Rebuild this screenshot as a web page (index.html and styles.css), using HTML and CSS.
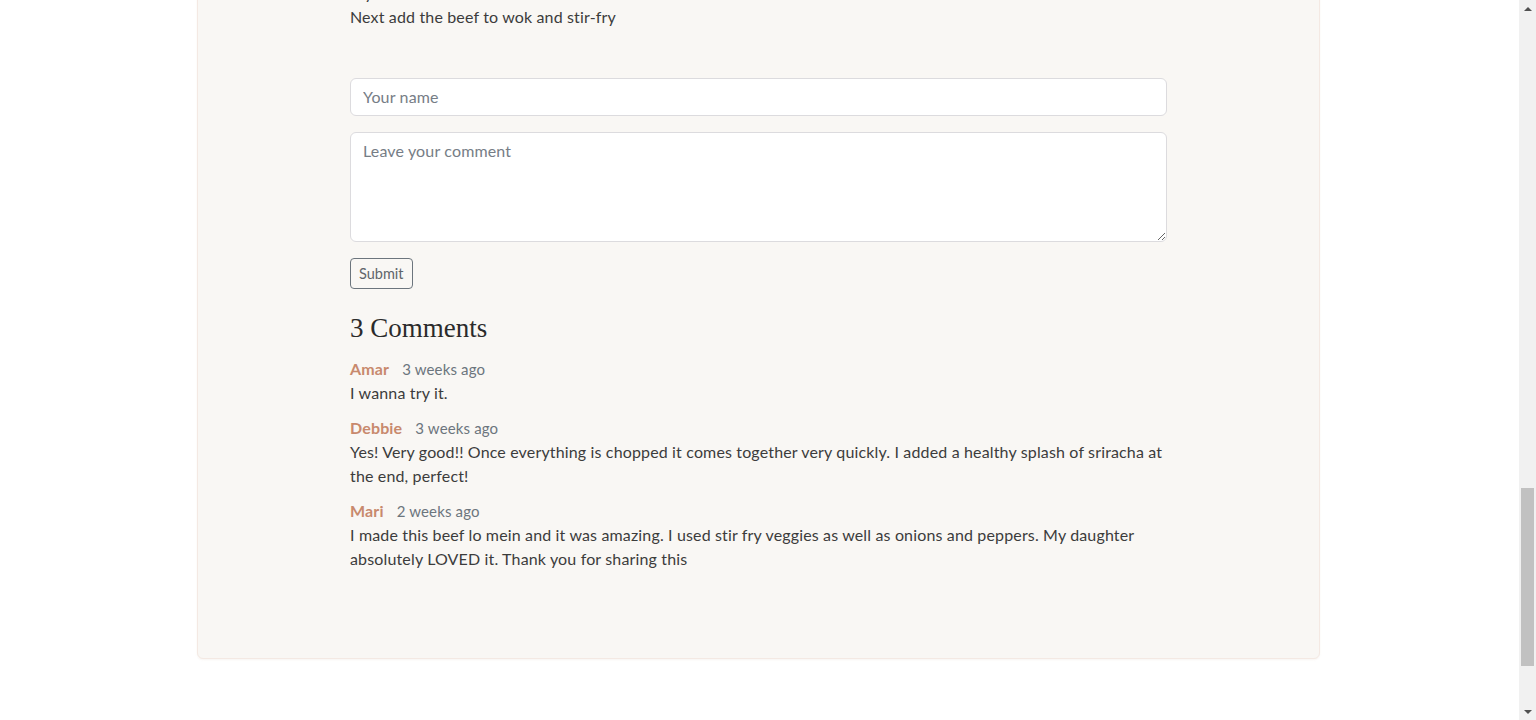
FILE: index.html
```html
<!DOCTYPE html>
<html lang="en">
<head>
<meta charset="utf-8">
<title>Beef Lo Mein</title>
<link rel="stylesheet" href="styles.css">
</head>
<body>
<main class="main">
  <article class="card">
    <h2 class="section-title">Instructions</h2>
    <div class="steps">
      <p>Heat the oil in a wok over medium heat.</p>
      <p>Add the onions and the carrots.</p>
      <p>Fry the onions until soft.</p>
      <p id="last-step">Next add the beef to wok and stir-fry</p>
    </div>

    <form class="comment-form">
      <input class="field" type="text" placeholder="Your name">
      <textarea class="field area" rows="4" placeholder="Leave your comment"></textarea>
      <button class="submit" type="button">Submit</button>
    </form>

    <h3 class="comments-title">3 Comments</h3>
    <div class="comment">
      <div class="comment-head"><span class="name">Amar</span><span class="ago">3 weeks ago</span></div>
      <p class="comment-body">I wanna try it.</p>
    </div>
    <div class="comment">
      <div class="comment-head"><span class="name">Debbie</span><span class="ago">3 weeks ago</span></div>
      <p class="comment-body">Yes! Very good!! Once everything is chopped it comes together very quickly. I added a healthy splash of sriracha at the end, perfect!</p>
    </div>
    <div class="comment">
      <div class="comment-head"><span class="name">Mari</span><span class="ago">2 weeks ago</span></div>
      <p class="comment-body">I made this beef lo mein and it was amazing. I used stir fry veggies as well as onions and peppers. My daughter absolutely LOVED it. Thank you for sharing this</p>
    </div>
  </article>
</main>
<div class="footer-space"></div>

<div class="scrollbar" aria-hidden="true">
  <div class="sb-btn"><span class="arrow-up"></span></div>
  <div class="sb-track"><div class="sb-thumb"></div></div>
  <div class="sb-btn"><span class="arrow-down"></span></div>
</div>
<script src="script.js"></script>
</body>
</html>
```
FILE: styles.css
```css
html {
  scroll-behavior: auto;
}
body {
  margin: 0 17px 0 0;
  background: #ffffff;
  font-family: "Lato", "Liberation Sans", sans-serif;
  font-size: 16px;
  line-height: 24px;
  letter-spacing: 0.15px;
  color: #3c3c3c;
}
p {
  margin: 0;
}
.main {
  padding: 40px 2px 0 0;
}
.card {
  box-sizing: border-box;
  width: 1123px;
  margin: 0 auto;
  padding: 48px 152px 76px 152px;
  background: #f9f7f4;
  border: 1px solid #f4e9e3;
  border-radius: 6px;
  box-shadow: 0 1px 2px rgba(200, 170, 150, 0.12);
}
.section-title {
  font-family: "Liberation Serif", serif;
  font-weight: 400;
  font-size: 28px;
  line-height: 34px;
  letter-spacing: 0;
  margin: 0 0 12px;
  color: #2b2b2b;
}
.comment-form {
  display: flex;
  flex-direction: column;
  align-items: flex-start;
  gap: 16px;
  margin-top: 49px;
}
.field {
  box-sizing: border-box;
  width: 100%;
  padding: 6px 12px;
  font-family: "Lato", "Liberation Sans", sans-serif;
  font-size: 16px;
  line-height: 24px;
  letter-spacing: 0.15px;
  color: #3c3c3c;
  background: #ffffff;
  border: 1px solid #dcdbde;
  border-radius: 6px;
  outline: none;
}
.field::placeholder {
  color: #767d86;
}
.area {
  height: 110px;
  resize: vertical;
  display: block;
}
.submit {
  font-family: "Lato", "Liberation Sans", sans-serif;
  font-size: 14.5px;
  line-height: 21px;
  padding: 4px 8px;
  color: #5f656b;
  background: transparent;
  border: 1px solid #6c757d;
  border-radius: 4px;
}
.comments-title {
  font-family: "Liberation Serif", serif;
  font-weight: 400;
  font-size: 27px;
  line-height: 32px;
  letter-spacing: 0;
  color: #2b2b2b;
  margin: 23px 0 13px;
}
.comment {
  margin-bottom: 11px;
}
.comment-head {
  display: flex;
  align-items: baseline;
  gap: 13px;
  height: 24px;
}
.name {
  color: #c8896d;
  font-weight: 700;
}
.ago {
  font-size: 15px;
  line-height: 24px;
  color: #6c757d;
}
.footer-space {
  height: 760px;
}

/* drawn page scrollbar overlay */
.scrollbar {
  position: fixed;
  top: 0;
  right: 0;
  width: 17px;
  height: 100vh;
  background: #f1f1f1;
  display: flex;
  flex-direction: column;
}
.sb-btn {
  height: 17px;
  display: flex;
  align-items: center;
  justify-content: center;
}
.arrow-up {
  width: 0;
  height: 0;
  border-left: 4px solid transparent;
  border-right: 4px solid transparent;
  border-bottom: 4px solid #505050;
}
.arrow-down {
  width: 0;
  height: 0;
  border-left: 4px solid transparent;
  border-right: 4px solid transparent;
  border-top: 4px solid #505050;
}
.sb-track {
  flex: 1;
}
.sb-thumb {
  margin: 471px 2px 0 2px;
  height: 178px;
  background: #c1c1c1;
}
```
FILE: script.js
```js
(function () {
  function place() {
    var el = document.getElementById('last-step');
    if (!el) return;
    var y = el.getBoundingClientRect().top + window.scrollY - 5;
    window.scrollTo(0, y);
  }
  place();
  window.addEventListener('load', place);
})();
```
